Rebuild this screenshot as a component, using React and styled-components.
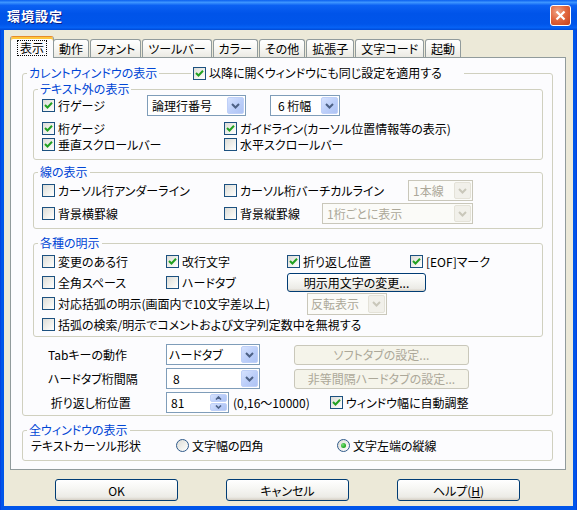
import React from 'react';
import styled, { createGlobalStyle } from 'styled-components';

const GlobalStyle = createGlobalStyle`
  html, body { margin: 0; padding: 0; background: #ECE9D8; }
  body {
    font-family: "Noto Sans CJK JP", "Noto Sans", sans-serif;
    font-size: 12px;
    font-feature-settings: "palt";
    color: #000;
  }
  * { box-sizing: border-box; }
`;

const Window = styled.div`
  width: 577px;
  height: 510px;
  display: flex;
  flex-direction: column;
  background: linear-gradient(90deg, #0831D9 0, #0055EA 1px, #0055EA calc(100% - 1px), #0831D9 100%);
`;

const TitleBar = styled.div`
  height: 30px;
  flex: none;
  display: flex;
  align-items: center;
  justify-content: space-between;
  padding: 0 6px 0 7px;
  background: linear-gradient(180deg, #0A5FEF 0%, #3D95FF 8%, #0B61F3 18%, #0054E9 45%, #0055EA 80%, #0662F5 92%, #004AD6 100%);
`;

const TitleText = styled.span`
  color: #fff;
  font-size: 13px;
  font-weight: bold;
  letter-spacing: 1px;
  text-shadow: 1px 1px 0 #0A1E87;
`;

const CloseButton = styled.div`
  width: 21px;
  height: 21px;
  border: 1px solid #fff;
  border-radius: 3px;
  background: radial-gradient(circle at 35% 30%, #F0A486 0%, #E2683F 45%, #C6401A 100%);
  display: flex;
  align-items: center;
  justify-content: center;
`;

const Body = styled.div`
  flex: 1;
  margin: 0 4px 4px;
  background: #ECE9D8;
  padding: 6px 7px 0 6px;
  display: flex;
  flex-direction: column;
`;

const TabStrip = styled.div`
  display: flex;
  align-items: flex-end;
  gap: 1px;
  padding-left: 2px;
  margin-bottom: -1px;
  position: relative;
  z-index: 1;
`;

const Tab = styled.div`
  height: ${p => (p.$active ? 22 : 18)}px;
  margin: 0 ${p => (p.$active ? -2 : 0)}px ${p => (p.$active ? 0 : 1)}px;
  padding: 0 ${p => (p.$active ? 7 : 5)}px;
  display: flex;
  align-items: center;
  border: 1px solid #919B9C;
  border-bottom: none;
  border-top-color: ${p => (p.$active ? '#E68B2C' : '#919B9C')};
  border-radius: 3px 3px 0 0;
  background: ${p =>
    p.$active ? '#FCFCFE' : 'linear-gradient(180deg, #FFFFFF 0%, #F7F7F4 50%, #EBEAE3 100%)'};
  box-shadow: ${p => (p.$active ? 'inset 0 2px 0 #FFC73C' : 'none')};
  position: relative;
  z-index: ${p => (p.$active ? 2 : 1)};
  white-space: nowrap;
`;

const FocusRing = styled.span`
  outline: 1px dotted #000;
  outline-offset: 0;
  padding: 0 2px;
  line-height: 14px;
`;

const Panel = styled.div`
  background: #FCFCFE;
  border: 1px solid #919B9C;
  padding: 8px 12px 8px 11px;
  position: relative;
`;

const Group = styled.fieldset`
  margin: ${p => p.$mt || 0}px 0 0;
  padding: 0;
  border: 1px solid #D0D0BF;
  border-radius: 3px;
  min-width: 0;
`;

const Legend = styled.legend`
  margin-left: 4px;
  padding: 0 2px;
  height: 14px;
  line-height: 14px;
  color: #0046D5;
  position: relative;
  white-space: nowrap;
`;

const LegendExtra = styled.div`
  position: absolute;
  top: 0;
  left: 164px;
  width: 273px;
  height: 14px;
  padding-left: 2px;
  background: #FCFCFE;
  display: flex;
  align-items: center;
  color: #000;
`;

const GroupBody = styled.div`
  padding: ${p => p.$pad};
`;

const Row = styled.div`
  display: flex;
  align-items: center;
  height: ${p => p.$h || 21}px;
  margin-top: ${p => p.$mt || 0}px;
  padding-left: ${p => p.$pl || 0}px;
`;

const Cell = styled.div`
  width: ${p => p.$w}px;
  flex: none;
  display: flex;
  align-items: center;
  margin-left: ${p => p.$ml || 0}px;
  white-space: nowrap;
`;

const CheckLabel = styled.span`
  display: inline-flex;
  align-items: center;
  gap: 3px;
  white-space: nowrap;
`;

const CheckSquare = styled.span`
  width: 13px;
  height: 13px;
  flex: none;
  border: 1px solid #1C5180;
  background: linear-gradient(135deg, #DCDCD7 0%, #F2F2EE 60%, #FFFFFF 100%);
  display: flex;
  align-items: center;
  justify-content: center;
`;

const RadioCircle = styled(CheckSquare)`
  border-radius: 50%;
  border-color: #2F5A8A;
`;

const RadioDot = styled.span`
  width: 5px;
  height: 5px;
  border-radius: 50%;
  background: radial-gradient(circle at 35% 35%, #7BE07A 0%, #2AAE28 60%, #1B8C1A 100%);
`;

const ComboBox = styled.div`
  width: ${p => p.$w}px;
  height: ${p => p.$h || 21}px;
  flex: none;
  display: flex;
  align-items: stretch;
  padding: 1px;
  border: 1px solid ${p => (p.$disabled ? '#C9C7BA' : '#7F9DB9')};
  background: ${p => (p.$disabled ? '#FBFBF8' : '#FFFFFF')};
  color: ${p => (p.$disabled ? '#ACA899' : '#000')};
  margin-left: ${p => p.$ml || 0}px;
`;

const ComboValue = styled.span`
  flex: 1;
  display: flex;
  align-items: center;
  padding-left: ${p => p.$indent ?? 3}px;
  white-space: nowrap;
  overflow: hidden;
`;

const DropButton = styled.span`
  width: 17px;
  flex: none;
  display: flex;
  align-items: center;
  justify-content: center;
  border-radius: 2px;
  border: 1px solid ${p => (p.$disabled ? '#E4E2D8' : '#BFD0F8')};
  background: ${p =>
    p.$disabled ? '#F1F0EA' : 'linear-gradient(135deg, #D6E2FE 0%, #BBCEF9 55%, #AEC3F4 100%)'};
`;

const SpinBox = styled(ComboBox)``;

const SpinButtons = styled.span`
  width: 17px;
  flex: none;
  display: flex;
  flex-direction: column;
  gap: 1px;
`;

const SpinHalf = styled(DropButton)`
  width: 100%;
  flex: 1;
`;

const PushButton = styled.button`
  width: ${p => p.$w}px;
  height: ${p => p.$h || 22}px;
  flex: none;
  padding: 0;
  margin-left: ${p => p.$ml || 0}px;
  font: inherit;
  font-size: 12px;
  color: #000;
  border: 1px solid #003C74;
  border-radius: 3px;
  background: linear-gradient(180deg, #FFFFFF 0%, #F7F7F4 40%, #ECEBE6 85%, #D6D0C5 100%);
  white-space: nowrap;

  &:disabled {
    color: #ACA899;
    border-color: #C9C7BA;
    background: #F5F4EA;
  }
`;

const Note = styled.span`
  width: ${p => p.$w}px;
  flex: none;
  margin-left: ${p => p.$ml || 0}px;
  white-space: nowrap;
`;

const Footer = styled.div`
  display: flex;
  gap: 48px;
  padding-left: 45px;
  margin-top: 9px;
`;

const Chevron = ({ color = '#4D6185' }) => (
  <svg width="9" height="6" viewBox="0 0 9 6">
    <path d="M1 1 L4.5 4.5 L8 1" fill="none" stroke={color} strokeWidth="2" />
  </svg>
);

const SmallArrow = ({ up }) => (
  <svg width="7" height="4" viewBox="0 0 7 4">
    <path d={up ? 'M1 3.5 L3.5 1 L6 3.5' : 'M1 0.5 L3.5 3 L6 0.5'} fill="none" stroke="#4D6185" strokeWidth="1.6" />
  </svg>
);

const Check = ({ checked, children }) => (
  <CheckLabel>
    <CheckSquare>
      {checked && (
        <svg width="9" height="9" viewBox="0 0 9 9">
          <path d="M1 4 L3.5 6.5 L8 1.8" fill="none" stroke="#21A121" strokeWidth="2" />
        </svg>
      )}
    </CheckSquare>
    {children}
  </CheckLabel>
);

const Radio = ({ checked, children }) => (
  <CheckLabel>
    <RadioCircle>{checked && <RadioDot />}</RadioCircle>
    {children}
  </CheckLabel>
);

const Combo = ({ w, h, value, disabled, indent, ml }) => (
  <ComboBox $w={w} $h={h} $disabled={disabled} $ml={ml}>
    <ComboValue $indent={indent}>{value}</ComboValue>
    <DropButton $disabled={disabled}>
      <Chevron color={disabled ? '#C9C7BA' : '#4D6185'} />
    </DropButton>
  </ComboBox>
);

const tabs = ['表示', '動作', 'フォント', 'ツールバー', 'カラー', 'その他', '拡張子', '文字コード', '起動'];

export default function App() {
  return (
    <>
      <GlobalStyle />
      <Window>
        <TitleBar>
          <TitleText>環境設定</TitleText>
          <CloseButton>
            <svg width="11" height="11" viewBox="0 0 11 11">
              <path d="M1.5 1.5 L9.5 9.5 M9.5 1.5 L1.5 9.5" stroke="#fff" strokeWidth="2.2" />
            </svg>
          </CloseButton>
        </TitleBar>
        <Body>
          <TabStrip>
            {tabs.map((t, i) => (
              <Tab key={t} $active={i === 0}>
                {i === 0 ? <FocusRing>{t}</FocusRing> : t}
              </Tab>
            ))}
          </TabStrip>
          <Panel>
            <Group>
              <Legend>
                カレントウィンドウの表示
                <LegendExtra>
                  <Check checked>以降に開くウィンドウにも同じ設定を適用する</Check>
                </LegendExtra>
              </Legend>
              <GroupBody $pad="2px 9px 2px 10px">
                <Group>
                  <Legend>テキスト外の表示</Legend>
                  <GroupBody $pad="0 8px 7px">
                    <Row $mt={-1}>
                      <Cell $w={105}><Check checked>行ゲージ</Check></Cell>
                      <Combo w={99} value="論理行番号" indent={3} />
                      <Combo w={70} value="6 桁幅" indent={6} ml={24} />
                    </Row>
                    <Row $h={16} $mt={4}>
                      <Cell $w={182}><Check checked>桁ゲージ</Check></Cell>
                      <Check checked>ガイドライン(カーソル位置情報等の表示)</Check>
                    </Row>
                    <Row $h={16}>
                      <Cell $w={182}><Check checked>垂直スクロールバー</Check></Cell>
                      <Check>水平スクロールバー</Check>
                    </Row>
                  </GroupBody>
                </Group>

                <Group $mt={5}>
                  <Legend>線の表示</Legend>
                  <GroupBody $pad="0 8px 4px">
                    <Row $mt={1}>
                      <Cell $w={182}><Check>カーソル行アンダーライン</Check></Cell>
                      <Cell $w={184}><Check>カーソル桁バーチカルライン</Check></Cell>
                      <Combo w={65} value="1本線" disabled />
                    </Row>
                    <Row $mt={2}>
                      <Cell $w={182}><Check>背景横罫線</Check></Cell>
                      <Cell $w={98}><Check>背景縦罫線</Check></Cell>
                      <Combo w={151} value="1桁ごとに表示" disabled />
                    </Row>
                  </GroupBody>
                </Group>

                <Group $mt={7}>
                  <Legend>各種の明示</Legend>
                  <GroupBody $pad="1px 8px 1px">
                    <Row>
                      <Cell $w={124}><Check>変更のある行</Check></Cell>
                      <Cell $w={121}><Check checked>改行文字</Check></Cell>
                      <Cell $w={123}><Check checked>折り返し位置</Check></Cell>
                      <Check checked>[EOF]マーク</Check>
                    </Row>
                    <Row>
                      <Cell $w={124}><Check>全角スペース</Check></Cell>
                      <Cell $w={121}><Check>ハードタブ</Check></Cell>
                      <PushButton $w={139} $h={19}>明示用文字の変更...</PushButton>
                    </Row>
                    <Row>
                      <Cell $w={265}><Check>対応括弧の明示(画面内で10文字差以上)</Check></Cell>
                      <Combo w={80} h={22} value="反転表示" indent={2} disabled />
                    </Row>
                    <Row>
                      <Check>括弧の検索/明示でコメントおよび文字列定数中を無視する</Check>
                    </Row>
                  </GroupBody>
                </Group>

                <Row $mt={7} $pl={15}>
                  <Cell $w={118}>Tabキーの動作</Cell>
                  <Combo w={94} value="ハードタブ" indent={1} />
                  <PushButton $w={175} $h={20} $ml={34} disabled>ソフトタブの設定...</PushButton>
                </Row>
                <Row $mt={3} $pl={15}>
                  <Cell $w={118}>ハードタブ桁間隔</Cell>
                  <Combo w={94} value="8" indent={5} />
                  <PushButton $w={175} $h={20} $ml={34} disabled>非等間隔ハードタブの設定...</PushButton>
                </Row>
                <Row $mt={3} $pl={15}>
                  <Cell $w={118}>&nbsp;折り返し桁位置</Cell>
                  <SpinBox $w={63}>
                    <ComboValue $indent={3}>81</ComboValue>
                    <SpinButtons>
                      <SpinHalf><SmallArrow up /></SpinHalf>
                      <SpinHalf><SmallArrow /></SpinHalf>
                    </SpinButtons>
                  </SpinBox>
                  <Note $w={97} $ml={4}>(0,16～10000)</Note>
                  <Check checked>ウィンドウ幅に自動調整</Check>
                </Row>
              </GroupBody>
            </Group>

            <Group $mt={7}>
              <Legend>全ウィンドウの表示</Legend>
              <GroupBody $pad="0 8px 7px">
                <Row $h={16}>
                  <Cell $w={145}>テキストカーソル形状</Cell>
                  <Cell $w={161}><Radio>文字幅の四角</Radio></Cell>
                  <Radio checked>文字左端の縦線</Radio>
                </Row>
              </GroupBody>
            </Group>
          </Panel>
          <Footer>
            <PushButton $w={123}>OK</PushButton>
            <PushButton $w={123}>キャンセル</PushButton>
            <PushButton $w={123}>ヘルプ(<u>H</u>)</PushButton>
          </Footer>
        </Body>
      </Window>
    </>
  );
}
